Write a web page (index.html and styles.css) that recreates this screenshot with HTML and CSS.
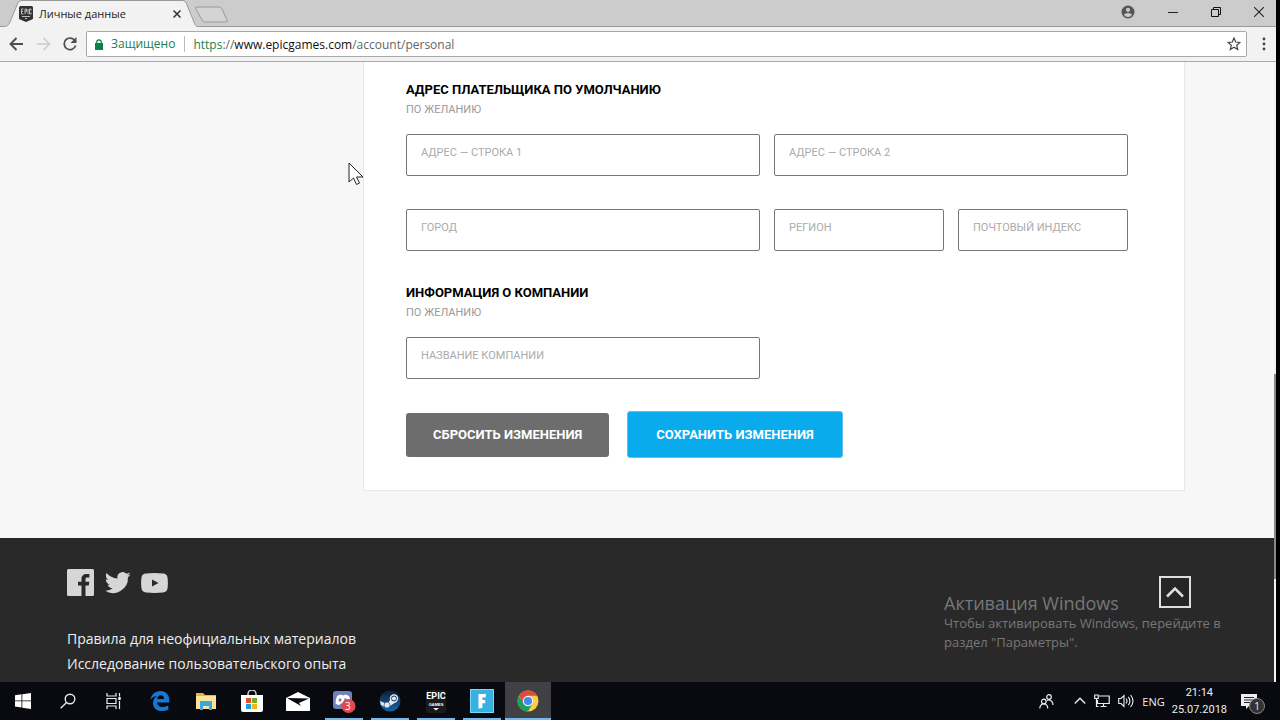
FILE: index.html
```html
<!DOCTYPE html>
<html lang="ru">
<head>
<meta charset="utf-8">
<meta name="viewport" content="width=device-width, initial-scale=1">
<title>Личные данные</title>
<link rel="stylesheet" href="styles.css">
</head>
<body>
<div class="window">
  <header class="tabstrip">
    <div class="tab">
      <svg class="tab-shape" viewBox="0 0 194 27" preserveAspectRatio="none"><path d="M0 27C4 26 5 24 6 22L13 5C14 2 15 .5 18 .5H178C181 .5 182 2 183 5L190 22C191 25 192 26 194 27" fill="#f2f2f2" stroke="#999"/></svg>
      <svg class="favicon" width="14" height="16" viewBox="0 0 14 16"><path d="M1.5 0h11Q14 0 14 1.500V12.500Q14 13.200 13 13.500L7 16 1 13.500Q0 13.200 0 12.500V1.500Q0 0 1.500 0Z" fill="#333"/><path d="M4.500 3H2.500v5h2M2.500 5.500h1.500M6 8V3h1.500v2.500H6M9 3v5M12 4.500V3h-1.500v5H12V6.500M3 10.500h8M6 12.500h2" fill="none" stroke="#ccc" stroke-width=".9"/></svg>
      <span class="tab-title">Личные данные</span>
      <button class="icon-btn" aria-label="Закрыть вкладку"><svg width="8" height="8" viewBox="0 0 8 8"><path d="M.5.5l7 7M7.500.5l-7 7" stroke="#333" stroke-width="1.500"/></svg></button>
    </div>
    <button class="icon-btn new-tab" aria-label="Новая вкладка"><svg width="34" height="17" viewBox="0 0 34 17"><path d="M2 1h22q2 0 3 2l5 11q1 2-1 2H10q-2 0-3-2L1 3Q0 1 2 1Z" fill="#d4d4d4" stroke="#999"/></svg></button>
    <nav class="window-controls" aria-label="Окно">
      <button class="icon-btn" aria-label="Профиль"><svg width="14" height="14" viewBox="0 0 14 14"><circle cx="7" cy="7" r="6.500" fill="#555"/><circle cx="7" cy="4.800" r="2.100" fill="#ccc"/><path d="M2.800 9.500Q7 6.500 11.200 9.500 9.500 12 7 12T2.800 9.500Z" fill="#ccc"/></svg></button>
      <button class="icon-btn" aria-label="Свернуть"><svg width="10" height="10" viewBox="0 0 10 10"><path d="M0 5.500h10" stroke="#222"/></svg></button>
      <button class="icon-btn" aria-label="Развернуть"><svg width="10" height="10" viewBox="0 0 10 10"><path d="M.5 2.500h7v7h-7ZM2.500 2.500v-2h7v7h-2" fill="none" stroke="#111"/></svg></button>
      <button class="icon-btn" aria-label="Закрыть"><svg width="10" height="10" viewBox="0 0 10 10"><path d="M0 0l10 10M10 0L0 10" stroke="#222" stroke-width="1.100"/></svg></button>
    </nav>
  </header>

  <div class="toolbar">
    <button class="icon-btn" aria-label="Назад"><svg width="15" height="14" viewBox="0 0 15 14"><path d="M14 7H2M7.500 1l-6 6 6 6" fill="none" stroke="#4d4d4d" stroke-width="1.900"/></svg></button>
    <button class="icon-btn" aria-label="Вперёд"><svg width="15" height="14" viewBox="0 0 15 14"><path d="M1 7h12M7.500 1l6 6-6 6" fill="none" stroke="#ccc" stroke-width="1.600"/></svg></button>
    <button class="icon-btn" aria-label="Обновить"><svg width="14" height="14" viewBox="0 0 14 14"><path d="M11.800 3.500A5.800 5.800 0 1 0 12.600 8.500" fill="none" stroke="#4d4d4d" stroke-width="1.700"/><path d="M13.500 0v6h-6Z" fill="#4d4d4d"/></svg></button>
    <div class="address">
      <svg class="lock" width="8" height="11" viewBox="0 0 8 11"><path d="M0 4h8v7H0Z" fill="#0b8043"/><path d="M1.800 4.500V3a2.200 2.200 0 0 1 4.400 0v1.500" fill="none" stroke="#0b8043" stroke-width="1.200"/></svg>
      <span class="secure">Защищено</span>
      <span class="url"><span class="scheme">https</span>://<b>www.epicgames.com</b>/account/personal</span>
      <button class="icon-btn" aria-label="В закладки"><svg width="14" height="14" viewBox="0 0 14 14"><path d="M7 1l1.700 4 4.300.4-3.300 2.800 1 4.300L7 10.200l-3.700 2.300 1-4.300L1 5.400 5.300 5Z" fill="none" stroke="#444" stroke-width="1.200"/></svg></button>
    </div>
    <button class="icon-btn menu" aria-label="Меню"><svg width="4" height="14" viewBox="0 0 4 14" fill="#444"><circle cx="2" cy="2" r="1.400"/><circle cx="2" cy="7" r="1.400"/><circle cx="2" cy="12" r="1.400"/></svg></button>
  </div>

  <div class="viewport">
    <div class="page">
      <main class="main">
        <form class="card">
          <h2 class="heading">Адрес плательщика по умолчанию</h2>
          <p class="optional">По желанию</p>
          <div class="fields">
            <input class="field wide" type="text" aria-label="Адрес — строка 1" placeholder="АДРЕС — СТРОКА 1">
            <input class="field wide" type="text" aria-label="Адрес — строка 2" placeholder="АДРЕС — СТРОКА 2">
            <input class="field wide" type="text" aria-label="Город" placeholder="ГОРОД">
            <input class="field" type="text" aria-label="Регион" placeholder="РЕГИОН">
            <input class="field" type="text" aria-label="Почтовый индекс" placeholder="ПОЧТОВЫЙ ИНДЕКС">
          </div>
          <h2 class="heading">Информация о компании</h2>
          <p class="optional">По желанию</p>
          <div class="fields">
            <input class="field wide" type="text" aria-label="Название компании" placeholder="НАЗВАНИЕ КОМПАНИИ">
          </div>
          <div class="actions">
            <button class="btn reset" type="button">Сбросить изменения</button>
            <button class="btn save" type="button">Сохранить изменения</button>
          </div>
        </form>
      </main>
      <footer class="footer">
        <div class="footer-links">
          <div class="social">
            <a href="#" aria-label="Facebook"><svg width="27" height="27" viewBox="0 0 27 27"><path fill="#d6d6d6" fill-rule="evenodd" d="M1.500 0h24Q27 0 27 1.500v24q0 1.500-1.500 1.500H18.500V16.500h3.300l.5-3.800h-3.800v-2.400c0-1.200.4-1.800 2-1.800h1.900V5.100c-.5-.1-1.500-.2-2.700-.2-3.100 0-5.200 1.700-5.200 5v2.800H11v3.800h3.500V27h-13Q0 27 0 25.500v-24Q0 0 1.500 0Z"/></svg></a>
            <a href="#" aria-label="Twitter"><svg width="27" height="27" viewBox="0 0 24 24"><path fill="#d6d6d6" d="M23.600 4.900c-.8.400-1.700.6-2.700.8 1-.6 1.700-1.500 2-2.600-.9.500-1.900.9-2.900 1.100a4.700 4.700 0 0 0-8 4.300C8 8.300 4.600 6.400 2.300 3.600c-1.200 2.100-.6 4.800 1.400 6.200-.7 0-1.500-.2-2.100-.6v.1c0 2.200 1.600 4.100 3.800 4.600-.7.200-1.400.2-2.100.1.600 1.800 2.300 3.200 4.400 3.200A9.400 9.400 0 0 1 .7 19.200 13.400 13.400 0 0 0 21.300 7.300c.9-.7 1.700-1.500 2.300-2.400Z"/></svg></a>
            <a href="#" aria-label="YouTube"><svg width="27" height="20" viewBox="0 0 27 20"><path fill="#d6d6d6" fill-rule="evenodd" d="M5 .5Q13.500-.5 22 .5q4 .3 4.500 4 .8 5.500 0 11-.5 3.500-4.500 4-8.500.8-17 0-4-.5-4.500-4-.8-5.500 0-11Q1 .8 5 .5ZM11 6.500v7l6.500-3.500Z"/></svg></a>
          </div>
          <a class="link" href="#">Правила для неофициальных материалов</a>
          <a class="link" href="#">Исследование пользовательского опыта</a>
        </div>
        <aside class="watermark">
          <p class="watermark-title">Активация Windows</p>
          <p class="watermark-text">Чтобы активировать Windows, перейдите в раздел "Параметры".</p>
        </aside>
        <button class="to-top" aria-label="Наверх"><svg width="18" height="11" viewBox="0 0 18 11"><path d="M1 9.500l8-8 8 8" fill="none" stroke="#ddd" stroke-width="2.500"/></svg></button>
      </footer>
    </div>
    <div class="scrollbar"><div class="thumb"></div></div>
  </div>
</div>

<footer class="taskbar">
  <button class="task" aria-label="Пуск"><svg width="16" height="16" viewBox="0 0 16 16"><path fill="#fff" d="M0 2.200L6.500 1.300v6.200H0ZM7.300 1.200L16 0v7.500H7.300ZM0 8.300h6.500v6.200L0 13.600ZM7.300 8.300H16V16l-8.700-1.200Z"/></svg></button>
  <button class="task" aria-label="Поиск"><svg width="16" height="16" viewBox="0 0 16 16" fill="none" stroke="#e8e8e8" stroke-width="1.400"><circle cx="10" cy="6" r="4.800"/><path d="M6.500 9.500L.7 15.300"/></svg></button>
  <button class="task" aria-label="Представление задач"><svg width="16" height="16" viewBox="0 0 16 16" fill="none" stroke="#eee" stroke-width="1.200"><path d="M1 0v3h9V0M1 16v-3h9v3M1 5.500h9v5H1ZM13.500 0v3.500M13.500 8v8"/><path d="M12.300 4h2.400v3h-2.400Z" fill="#eee" stroke="none"/></svg></button>
  <button class="task" aria-label="Edge"><svg width="20" height="20" viewBox="0 0 20 20"><path fill="#1478d4" d="M.5 9C1.300 3.500 5 0 10.300 0 16.300 0 19.300 4.200 19.300 9.500v2H7c.2 3.300 3 4.500 6 4.500 2 0 3.700-.5 5.300-1.400v3.900c-2 1-4 1.500-6.500 1.500C6.500 20 3 17 3 12.200c0-3 1.500-5.700 4-7.200C4 5.200 2 6.700.5 9ZM7.200 8h6.900c0-2.300-1.100-3.700-3.300-3.700C8.700 4.300 7.500 5.700 7.200 8Z"/></svg></button>
  <button class="task" aria-label="Проводник"><svg width="20" height="18" viewBox="0 0 20 18"><path d="M0 1h7l2 2h11v14H0Z" fill="#e4b54c"/><path d="M0 4h20v13H0Z" fill="#fbe39b"/><path d="M4 18V9h12v9h-3v-4H7v4Z" fill="#39a8dc"/></svg></button>
  <button class="task" aria-label="Магазин"><svg width="22" height="22" viewBox="0 0 22 22"><path d="M7 6V4a4 4 0 0 1 8 0v2" fill="none" stroke="#ddd" stroke-width="1.400"/><path d="M0 5h22v15q0 2-2 2H2q-2 0-2-2Z" fill="#fff"/><path d="M5 8h5v5H5Z" fill="#e74b27"/><path d="M11 8h5v5h-5Z" fill="#74ad25"/><path d="M5 14h5v5H5Z" fill="#18a0df"/><path d="M11 14h5v5h-5Z" fill="#f4b51a"/></svg></button>
  <button class="task" aria-label="Почта"><svg width="24" height="19" viewBox="0 0 24 19"><path d="M0 6L12 0l12 6v13H0Z" fill="#fff"/><path d="M1 6l22 0.500L13 11l2 3Z" fill="#080a10"/></svg></button>
  <button class="task running" aria-label="Discord"><svg width="24" height="24" viewBox="0 0 24 24"><rect x="1" y="2" width="19" height="18" rx="3" fill="#7082bd"/><path d="M5 7q2-1.500 4-1.500l1 .8h2l1-.8q2 0 4 1.500 1.500 4 1.500 7.500-2 1.500-4 1.500l-1-1.500H8.500L7.500 16q-2 0-4-1.500Q3.500 11 5 7Z" fill="#fff"/><ellipse cx="8" cy="11" rx="1.500" ry="1.700" fill="#7082bd"/><ellipse cx="13.500" cy="11" rx="1.500" ry="1.700" fill="#7082bd"/><circle cx="16.500" cy="17" r="7" fill="#df4a50"/></svg><span class="count">3</span></button>
  <button class="task running" aria-label="Steam"><svg width="22" height="22" viewBox="0 0 22 22"><defs><linearGradient id="steam" x1="0" y1="0" x2="0" y2="1"><stop offset="0" stop-color="#101c38"/><stop offset="1" stop-color="#1567a5"/></linearGradient></defs><circle cx="11" cy="11" r="10.500" fill="url(#steam)"/><path d="M1 11l7 3 4-5 5 3-6 4-3 2-6-3Z" fill="#e4e9ef"/><circle cx="15" cy="8.500" r="4.200" fill="#e4e9ef"/><circle cx="15" cy="8.500" r="2.500" fill="#e4e9ef" stroke="#173c66"/><circle cx="8" cy="15" r="3" fill="#e4e9ef" stroke="#173c66" stroke-width=".6"/></svg></button>
  <button class="task running" aria-label="Epic Games"><span class="epic"><span class="epic-name">EPIC</span><span class="epic-sub">GAMES</span><svg width="8" height="3" viewBox="0 0 8 3"><path d="M1 0h6L4 2.500Z" fill="#eee"/></svg></span></button>
  <button class="task running" aria-label="Fortnite"><svg width="24" height="24" viewBox="0 0 24 24"><rect x=".5" y=".5" width="23" height="23" fill="#38b0e2" stroke="#79d8f5"/><path d="M8.500 5h7.500l-.4 3.500h-3.200v2.500h2.800v3.200h-2.800V19l-3.900.5Z" fill="#fff"/></svg></button>
  <button class="task running active" aria-label="Chrome"><svg width="22" height="22" viewBox="0 0 22 22"><circle cx="11" cy="11" r="10.500" fill="#ffcd42"/><path d="M1.900 5.750A10.500 10.500 0 0 1 20.100 5.750H11L6.500 13.500Z" fill="#dd4c3e"/><path d="M1.900 5.750A10.500 10.500 0 0 0 11 21.500L15.600 13.600 11 16 6.500 13.600Z" fill="#1da05d"/><circle cx="11" cy="11" r="5.200" fill="#f4f4f4"/><circle cx="11" cy="11" r="4.100" fill="#4687f4"/></svg></button>

  <div class="tray">
    <button class="icon-btn people" aria-label="Люди"><svg width="15" height="15" viewBox="0 0 15 15" fill="none" stroke="#eee" stroke-width="1.200"><circle cx="10" cy="3" r="2.300"/><circle cx="4.800" cy="7.500" r="2.300"/><path d="M.8 14.500Q1 10 4.800 10t4 4.500M8 6.500Q10 5.400 12 6.800 14 8 14 11"/></svg></button>
    <button class="icon-btn" aria-label="Скрытые значки"><svg width="12" height="8" viewBox="0 0 12 8"><path d="M.8 6.500L6 1.300l5.200 5.200" fill="none" stroke="#eee" stroke-width="1.400"/></svg></button>
    <button class="icon-btn" aria-label="Сеть"><svg width="16" height="14" viewBox="0 0 16 14" fill="none" stroke="#eee" stroke-width="1.200"><path d="M5 2h10.200v7.500H3.500V6M6.500 12.500h6M9.500 9.500v3M.7 1h3.500v3.500H.7ZM2.500 4.500V12.500h2"/></svg></button>
    <button class="icon-btn" aria-label="Громкость"><svg width="16" height="14" viewBox="0 0 16 14" fill="none" stroke="#eee" stroke-width="1.100"><path d="M.7 4.500H3L6 1.500v11L3 9.500H.7ZM8 4.500q2 2.500 0 5M10.300 2.800q3.200 4.200 0 8.400M12.600 1q4.800 6 0 12"/></svg></button>
    <span class="lang">ENG</span>
    <time class="clock" datetime="2018-07-25T21:14"><span>21:14</span><span>25.07.2018</span></time>
    <button class="icon-btn notice" aria-label="Уведомления: 1"><svg width="16" height="15" viewBox="0 0 16 15"><path d="M0 0h16v12H8l-3 3v-3H0Z" fill="#eee"/><path d="M3 3.500h10M3 6h10M3 8.500h8" stroke="#222"/></svg><span class="notice-count">1</span></button>
  </div>
</footer>

<svg class="cursor" width="16" height="24" viewBox="0 0 16 24" aria-hidden="true"><path d="M1 1v19l4.500-4 3 6.500 3-1.500-3-6H15Z" fill="#fff" stroke="#222"/></svg>
</body>
</html>
```

FILE: styles.css
```css
* { box-sizing: border-box; }

body {
  position: relative;
  margin: 0;
  min-height: 100vh;
  display: flex;
  flex-direction: column;
  background: #000;
  font-family: "Open Sans", "Noto Sans", sans-serif;
  font-size: 12px;
}

button { font-family: inherit; cursor: pointer; }
h2, p { margin: 0; }

.icon-btn {
  display: flex;
  align-items: center;
  justify-content: center;
  padding: 0;
  border: 0;
  background: none;
  color: inherit;
}

.window {
  flex: 1;
  display: flex;
  flex-direction: column;
  margin-right: 4px;
}

/* Browser frame */
.tabstrip {
  display: flex;
  height: 27px;
  padding-left: 4px;
  background: #ccc;
  border-bottom: 1px solid #999;
}

.tab {
  position: relative;
  display: flex;
  align-items: center;
  width: 194px;
  height: 27px;
  padding: 0 17px 0 15px;
}

.tab-shape {
  position: absolute;
  inset: 0;
  width: 100%;
  height: 100%;
}

.tab > :not(.tab-shape) { position: relative; }
.tab-title { flex: 1; margin-left: 6px; font-size: 11px; color: #222; }

.new-tab { margin-left: -3px; padding-top: 2px; }

.window-controls {
  display: flex;
  gap: 33px;
  margin-left: auto;
  padding: 0 12px 2px 0;
}

.toolbar {
  display: flex;
  align-items: center;
  gap: 12px;
  height: 35px;
  padding: 0 10px 0 9px;
  background: #f2f2f2;
  border-bottom: 1px solid #aaa;
}

.address {
  flex: 1;
  display: flex;
  align-items: center;
  height: 26px;
  padding: 0 5px 0 8px;
  margin-left: -3px;
  background: #fff;
  border: 1px solid #a9a9a9;
  border-radius: 2px;
  color: #666;
}

.secure {
  margin-left: 8px;
  padding-right: 9px;
  border-right: 1px solid #bbb;
  line-height: 16px;
  color: #1c7f4c;
}

.url { flex: 1; margin-left: 8px; }
.url b { font-weight: 400; color: #111; }
.scheme { color: #1c7f4c; }
.menu { margin-left: 3px; }

/* Web page */
.viewport { flex: 1; display: flex; }

.page {
  flex: 1;
  display: flex;
  flex-direction: column;
  background: #f7f7f7;
}

.main { flex: 1; padding: 0 89px 47px 363px; }

.card {
  padding: 18px 56px 32px 42px;
  background: #fff;
  border: 1px solid #e8e8e8;
  border-top: 0;
  font-family: Roboto, sans-serif;
}

.heading {
  line-height: 20px;
  font-size: 13px;
  font-weight: 700;
  text-transform: uppercase;
  color: #000;
}

.optional {
  line-height: 20px;
  font-size: 11px;
  text-transform: uppercase;
  color: #999;
}

.fields {
  display: grid;
  grid-template-columns: repeat(4, 1fr);
  gap: 33px 14px;
  margin: 14px 0 32px;
}

.wide { grid-column: span 2; }

.field {
  width: 100%;
  height: 42px;
  padding: 0 14px 6px;
  border: 1px solid #777;
  border-radius: 2px;
  background: #fff;
  font-family: Roboto, sans-serif;
  font-size: 11px;
}

.field::placeholder { color: #aaa; opacity: 1; }

.actions { display: flex; align-items: center; gap: 18px; }

.btn {
  height: 44px;
  padding: 0 27px;
  border: 0;
  border-radius: 3px;
  font-size: 13px;
  font-weight: 700;
  text-transform: uppercase;
  color: #fff;
}

.reset { background: #6d6d6d; }
.save {
  height: 47px;
  padding: 0 28px;
  background: #0aabed;
  border: 1px solid #66bdeb;
}

.footer {
  display: flex;
  align-items: flex-start;
  height: 144px;
  padding: 0 83px 0 67px;
  background: #292929;
}

.footer-links { flex: 1; padding-top: 31px; }
.social { display: flex; align-items: center; gap: 10px; height: 27px; margin-bottom: 30px; }
.social a { display: flex; }

.link {
  display: block;
  line-height: 25px;
  font-size: 14px;
  color: #eee;
  text-decoration: none;
}

.watermark {
  width: 300px;
  margin-right: -85px;
  padding-top: 54px;
  color: #777;
}

.watermark-title { line-height: 22px; font-size: 18px; }
.watermark-text { line-height: 19px; font-size: 13px; }

.to-top {
  position: relative;
  width: 32px;
  height: 32px;
  margin-top: 38px;
  padding: 0;
  display: flex;
  align-items: center;
  justify-content: center;
  border: 2px solid #ddd;
  background: #252525;
}

.scrollbar {
  display: flex;
  flex-direction: column;
  width: 2px;
  background: #f1f1f1;
}

.thumb { height: 33%; margin-top: 312px; background: #888; }

/* Desktop taskbar */
.taskbar {
  display: flex;
  height: 38px;
  padding-right: 4px;
  background: #080a10;
  color: #eee;
}

.task {
  position: relative;
  display: flex;
  align-items: center;
  justify-content: center;
  width: 46px;
  padding: 0;
  border: 0;
  background: none;
}

.task:first-child { width: 45px; }

.running::after {
  content: "";
  position: absolute;
  left: 4px;
  right: 4px;
  bottom: 0;
  height: 2px;
  background: #76b9ed;
}

.active { background: #414145; }
.active::after { left: 0; right: 0; }

.count {
  position: absolute;
  left: 24px;
  top: 17px;
  line-height: 14px;
  font-size: 10px;
  color: #fff;
}

.epic {
  display: flex;
  flex-direction: column;
  align-items: center;
  width: 20px;
  padding: 1px 0 2px;
  border-radius: 2px;
  background: #1a1a1a;
  color: #fff;
}

.epic-name { font: 700 9px/11px "Liberation Sans Narrow", Roboto, sans-serif; }
.epic-sub { font: 700 4px/6px "Liberation Sans", sans-serif; }

.tray {
  display: flex;
  align-items: center;
  gap: 8px;
  margin-left: auto;
  padding-right: 10px;
}

.people { margin-right: 12px; }
.lang { font-size: 11px; }

.clock {
  display: flex;
  flex-direction: column;
  align-items: center;
  margin: 0 6px 0 -1px;
  line-height: 17px;
  font-family: Roboto, sans-serif;
  font-size: 11px;
}

.notice { position: relative; width: 25px; justify-content: flex-start; }

.notice-count {
  position: absolute;
  left: 8px;
  top: 4px;
  width: 16px;
  height: 16px;
  line-height: 14px;
  border: 1px solid #888;
  border-radius: 50%;
  background: #333;
  font-size: 10px;
  text-align: center;
}

/* Mouse pointer over the page */
.cursor {
  position: absolute;
  left: 348px;
  top: 162px;
  pointer-events: none;
}
```
